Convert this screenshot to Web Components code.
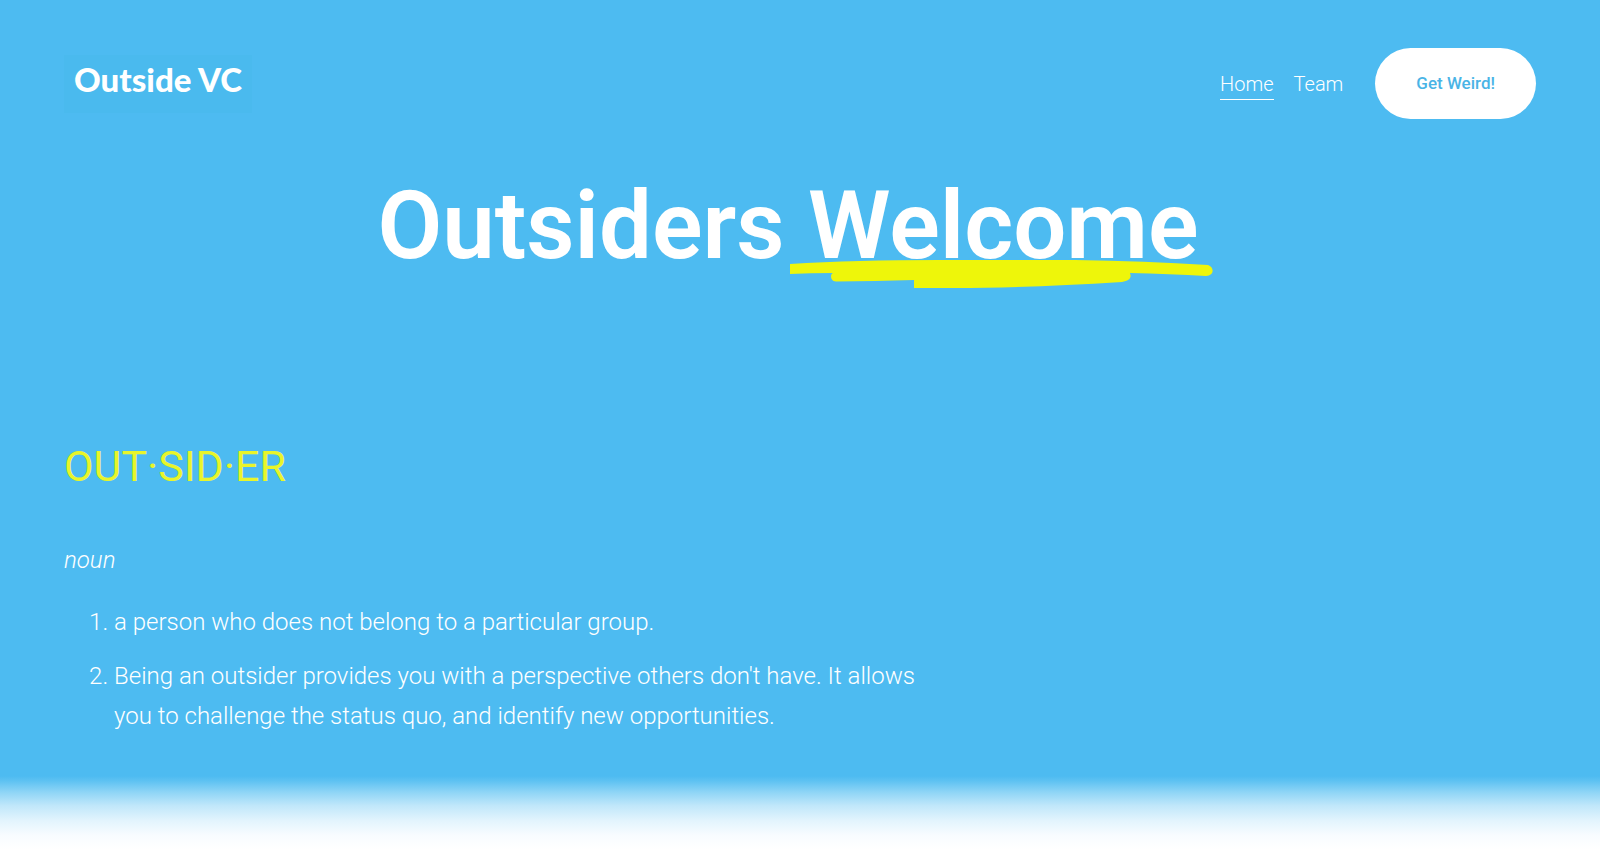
<!DOCTYPE html>
<html lang="en">
<head>
<meta charset="utf-8">
<meta name="viewport" content="width=device-width, initial-scale=1">
<title>Outside VC</title>
<style>
  html { background: #fff; }
  body { margin: 0; font-family: Roboto, "Liberation Sans", sans-serif; color: #fff; }
</style>
</head>
<body>
<outside-page>
  <site-header slot="header">
    <site-logo slot="logo" href="#home">Outside VC</site-logo>
    <nav-link href="#home" current>Home</nav-link>
    <nav-link href="#team">Team</nav-link>
    <pill-button slot="action">Get Weird!</pill-button>
  </site-header>
  <hero-title>Outsiders <marker-underline>Welcome</marker-underline></hero-title>
  <word-definition>
    <span slot="word">OUT·SID·ER</span>
    <span slot="part">noun</span>
    <span slot="first">a person who does not belong to a particular group.</span>
    <span slot="second">Being an outsider provides you with a perspective others don't have. It allows you to challenge the status quo, and identify new opportunities.</span>
  </word-definition>
</outside-page>

<script>
const define = (name, html, setup) => {
  const template = document.createElement('template');
  template.innerHTML = html;
  customElements.define(name, class extends HTMLElement {
    constructor() {
      super();
      this.attachShadow({ mode: 'open' }).append(template.content.cloneNode(true));
    }
    connectedCallback() { if (setup) setup(this, this.shadowRoot); }
  });
};

define('outside-page', `
  <style>
    :host { display: block; }
    .sky { background: #4dbbf1; padding: 48px 4% 40px; }
    .fade {
      height: 74px;
      background: linear-gradient(#4dbbf1 0%, #5cc1f2 6%, #8fd5f6 22%, #c0e7fa 40%, #e2f4fd 60%, #f8fcff 80%, #fff 100%);
    }
  </style>
  <div class="sky"><slot name="header"></slot><main><slot></slot></main></div>
  <div class="fade"></div>
`);

define('site-header', `
  <style>
    :host { display: block; }
    header { display: flex; align-items: center; justify-content: space-between; }
    .right { display: flex; align-items: center; gap: 32px; }
    nav { display: flex; gap: 20px; }
  </style>
  <header>
    <slot name="logo"></slot>
    <div class="right"><nav><slot></slot></nav><slot name="action"></slot></div>
  </header>
`);

const link = (el, root) => { root.querySelector('a').href = el.getAttribute('href'); };

define('site-logo', `
  <style>
    :host { display: block; }
    a {
      display: block; padding: 4px 10px 14px; background: #4abaee;
      font: 900 33px/40px Lato, "Liberation Sans", sans-serif;
      color: #fff; text-decoration: none;
    }
  </style>
  <a><slot></slot></a>
`, link);

define('nav-link', `
  <style>
    :host { display: block; }
    a {
      display: block; padding: 2px 0 0; font-weight: 300; font-size: 20px; line-height: 30px;
      color: #fff; text-decoration: none; border-bottom: 1px solid transparent;
    }
    :host([current]) a { border-color: #fff; }
  </style>
  <a><slot></slot></a>
`, link);

define('pill-button', `
  <style>
    :host { display: block; }
    button {
      display: block; margin: 0; border: 0; border-radius: 36px; padding: 24px 41px;
      background: #fff; color: #4ab4e6; font: 500 17px/23px Roboto, sans-serif; cursor: pointer;
    }
  </style>
  <button type="button"><slot></slot></button>
`);

define('hero-title', `
  <style>
    :host { display: block; }
    h1 { margin: 51px 0 0; padding-right: 24px; text-align: center; font-weight: 600; font-size: 94px; line-height: 112px; }
  </style>
  <h1><slot></slot></h1>
`);

define('marker-underline', `
  <style>
    :host { display: inline-block; position: relative; }
    svg { position: absolute; left: -18px; top: 90px; width: 423px; height: 28px; }
  </style>
  <slot></slot>
  <svg viewBox="0 0 423 28" aria-hidden="true">
    <path fill="#eef60a" d="M0 4Q65 0 150 0H285Q355 1 418 5C424 7 425 15 416 16Q380 14 340 13C342 18 339 21 332 22Q235 28 165 28H124V20Q85 21 46 21.500C40 21 40 14 43 13Q20 13 0 14Z"/>
  </svg>
`);

define('word-definition', `
  <style>
    :host { display: block; margin-top: 158px; font-weight: 300; font-size: 24px; line-height: 40px; }
    h2 { margin: 0 0 48px; font-weight: 400; font-size: 43px; line-height: 52px; color: #e8f52a; }
    p { margin: 0 0 22px; font-style: italic; }
    ol { margin: 0; padding: 0 0 0 50px; max-width: 57%; }
    li + li { margin-top: 14px; }
  </style>
  <h2><slot name="word"></slot></h2>
  <p><slot name="part"></slot></p>
  <ol><li><slot name="first"></slot></li><li><slot name="second"></slot></li></ol>
`);
</script>
</body>
</html>
